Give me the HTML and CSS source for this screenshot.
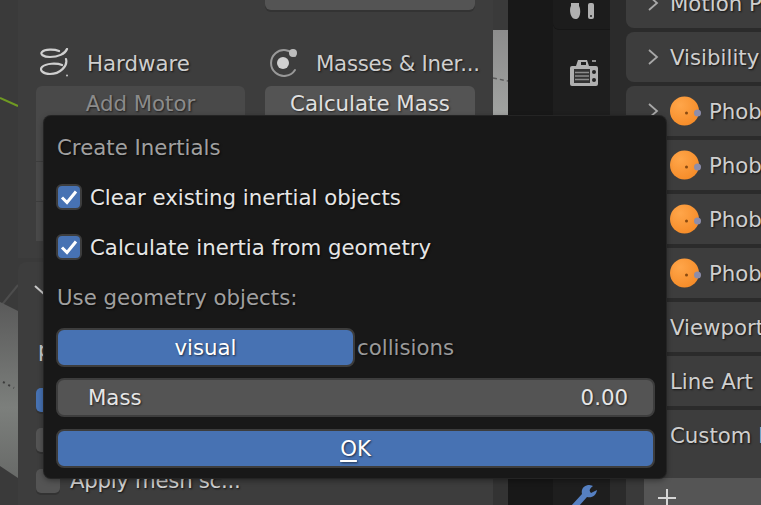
FILE: index.html
```html
<!DOCTYPE html>
<html>
<head>
    <title>Create Inertials</title>
    <link rel="stylesheet" href="styles.css">
</head>
<body>
    <div class="app">
        <!-- 3D viewport with the tool sidebar on it -->
        <div class="viewport">
            <svg class="scene" width="508" height="505" viewBox="0 0 508 505">
                <defs>
                    <linearGradient id="plane" x1="0" y1="0" x2="0" y2="1">
                        <stop offset="0" stop-color="#5a5a5a"/>
                        <stop offset="0.6" stop-color="#7c7f7c"/>
                        <stop offset="1" stop-color="#686a68"/>
                    </linearGradient>
                    <linearGradient id="planeRight" x1="0" y1="0" x2="0" y2="1">
                        <stop offset="0" stop-color="#8c8c8c"/>
                        <stop offset="1" stop-color="#a2a4a2"/>
                    </linearGradient>
                </defs>
                <path d="M0 98 L18 106" stroke="#6f9a22" stroke-width="2" fill="none"/>
                <path d="M0 307 L18 285" stroke="#4d4d4d" stroke-width="2" fill="none"/>
                <path d="M0 302 L18 311 V478 L0 466 Z" fill="url(#plane)"/>
                <path d="M3 382 L14 388" stroke="#3c3c3c" stroke-width="2" stroke-dasharray="2 4" fill="none"/>
                <rect x="493" y="30" width="15" height="90" fill="url(#planeRight)"/>
                <path d="M493 78 L508 81" stroke="#5c5c5c" stroke-width="1.5" stroke-dasharray="4 3" fill="none"/>
                <rect x="493" y="478" width="15" height="27" fill="#333333"/>
            </svg>

            <div class="sidebar">
                <div class="tool-panel">
                    <div class="tool-grid">
                        <div></div>
                        <div class="btn btn-stub"></div>
                        <div class="tool-head">
                            <svg class="head-icon" width="30" height="30" viewBox="0 0 30 30">
                                <path d="M27 1 C25 6 18 9 10 9 C3 9 0 6 2 4 C5 1 14 1 19 3 M26 11 C28 18 20 26 10 26 C3 26 -1 22 2 19 C6 15 17 15 22 17" fill="none" stroke="#d0d0d0" stroke-width="2.200" stroke-linecap="round"/>
                                <circle cx="27" cy="27.500" r="1" fill="#c9c9c9"/>
                            </svg>
                            <span class="label">Hardware</span>
                        </div>
                        <div class="tool-head">
                            <svg class="head-icon" width="30" height="30" viewBox="0 0 30 30">
                                <path d="M26 8 A13 13 0 1 0 26 22" fill="none" stroke="#999999" stroke-width="2" stroke-linecap="round"/>
                                <circle cx="14" cy="15" r="6" fill="#d0d0d0"/>
                                <circle cx="24" cy="5" r="4" fill="#bdbdbd"/>
                            </svg>
                            <span class="label label-masses">Masses &amp; Iner...</span>
                        </div>
                        <div class="btn btn-off">Add Motor</div>
                        <div class="btn">Calculate Mass</div>
                    </div>
                    <div class="hidden-stack">
                        <div class="stack-row"></div>
                        <div class="stack-row"></div>
                        <div class="stack-row"></div>
                    </div>
                </div>

                <div class="tool-panel tool-panel-low">
                    <svg class="low-chevron" width="14" height="12" viewBox="0 0 14 12">
                        <path d="M1 1 L10 9" stroke="#c9c9c9" stroke-width="2" fill="none"/>
                    </svg>
                    <div class="low-label">p</div>
                    <div class="low-check low-check-on"></div>
                    <div class="low-check"></div>
                    <div class="low-row">
                        <div class="low-check low-check-last"></div>
                        <span class="label label-apply">Apply mesh sc...</span>
                    </div>
                </div>
            </div>
        </div>

        <!-- dark strip between viewport and properties -->
        <div class="strip"></div>

        <div class="tabs">
            <div class="tab-group">
                <svg width="28" height="17" viewBox="0 0 28 17">
                    <path d="M1 0 H9 V3 C11 6 11 16 5.500 16 C0 16 -1 6 1 3 Z" fill="#b0b0b0"/>
                    <rect x="18" y="0" width="6" height="16" rx="2" fill="#b0b0b0"/>
                    <circle cx="21" cy="13" r="1" fill="#222222"/>
                </svg>
            </div>
            <svg class="tab-camera" width="28" height="27" viewBox="0 0 28 27">
                <path d="M2 7 H6 L8 1 H17 L19 7 H26 Q28 7 28 9 V25 Q28 27 26 27 H2 Q0 27 0 25 V9 Q0 7 2 7 Z" fill="#b0b0b0"/>
                <rect x="11" y="3" width="5" height="3" fill="#1e1e1e"/>
                <rect x="22" y="1" width="4" height="2" fill="#8e8e8e"/>
                <rect x="4" y="10" width="16" height="14" fill="#333333"/>
                <path d="M5 13.500 H19 M5 17 H19 M5 20.500 H19" stroke="#8c8c8c" stroke-width="1.500"/>
                <circle cx="24" cy="13" r="2" fill="#222222"/>
                <circle cx="24" cy="21" r="2" fill="#222222"/>
            </svg>
            <svg class="tab-wrench" width="28" height="22" viewBox="0 0 28 22">
                <path d="M18 1 C13 2 11 6 12 10 L1 22 H9 L17 13 C22 14 26 12 27 6 L21 9 C19 7 19 5 23 2 C21 1 20 1 18 1 Z" fill="#5680c2"/>
            </svg>
        </div>

        <!-- properties panels, they run off the right edge -->
        <div class="props">
            <div class="prop-row"><svg class="chev" width="12" height="18" viewBox="0 0 12 18"><path d="M2 2 L10 9 L2 16" fill="none" stroke="#a8a8a8" stroke-width="1.800"/></svg><span class="label">Motion Paths</span></div>
            <div class="prop-row"><svg class="chev" width="12" height="18" viewBox="0 0 12 18"><path d="M2 2 L10 9 L2 16" fill="none" stroke="#a8a8a8" stroke-width="1.800"/></svg><span class="label">Visibility</span></div>
            <div class="prop-row"><svg class="chev" width="12" height="18" viewBox="0 0 12 18"><path d="M2 2 L10 9 L2 16" fill="none" stroke="#a8a8a8" stroke-width="1.800"/></svg><svg class="phob-icon" width="32" height="30" viewBox="0 0 32 30"><defs><radialGradient id="orange" cx="0.35" cy="0.3" r="0.8"><stop offset="0" stop-color="#ffa64a"/><stop offset="1" stop-color="#f58a26"/></radialGradient></defs><circle cx="14.500" cy="15" r="14.500" fill="url(#orange)"/><circle cx="16.500" cy="17" r="1.500" fill="#8a4a10"/><circle cx="27.500" cy="17" r="3.500" fill="#8d8daa"/></svg><span class="label">Phobos</span></div>
            <div class="prop-row"><svg class="chev" width="12" height="18" viewBox="0 0 12 18"><path d="M2 2 L10 9 L2 16" fill="none" stroke="#a8a8a8" stroke-width="1.800"/></svg><svg class="phob-icon" width="32" height="30" viewBox="0 0 32 30"><circle cx="14.500" cy="15" r="14.500" fill="url(#orange)"/><circle cx="16.500" cy="17" r="1.500" fill="#8a4a10"/><circle cx="27.500" cy="17" r="3.500" fill="#8d8daa"/></svg><span class="label">Phobos</span></div>
            <div class="prop-row"><svg class="chev" width="12" height="18" viewBox="0 0 12 18"><path d="M2 2 L10 9 L2 16" fill="none" stroke="#a8a8a8" stroke-width="1.800"/></svg><svg class="phob-icon" width="32" height="30" viewBox="0 0 32 30"><circle cx="14.500" cy="15" r="14.500" fill="url(#orange)"/><circle cx="16.500" cy="17" r="1.500" fill="#8a4a10"/><circle cx="27.500" cy="17" r="3.500" fill="#8d8daa"/></svg><span class="label">Phobos</span></div>
            <div class="prop-row"><svg class="chev" width="12" height="18" viewBox="0 0 12 18"><path d="M2 2 L10 9 L2 16" fill="none" stroke="#a8a8a8" stroke-width="1.800"/></svg><svg class="phob-icon" width="32" height="30" viewBox="0 0 32 30"><circle cx="14.500" cy="15" r="14.500" fill="url(#orange)"/><circle cx="16.500" cy="17" r="1.500" fill="#8a4a10"/><circle cx="27.500" cy="17" r="3.500" fill="#8d8daa"/></svg><span class="label">Phobos</span></div>
            <div class="prop-row prop-plain"><span class="label">Viewport Display</span></div>
            <div class="prop-row prop-plain"><span class="label">Line Art</span></div>
            <div class="prop-row prop-plain prop-last"><span class="label">Custom Properties</span></div>
            <div class="add-bar">
                <div class="add-btn">
                    <svg width="18" height="18" viewBox="0 0 18 18"><path d="M9 0 V18 M0 9 H18" stroke="#d6d6d6" stroke-width="2"/></svg>
                </div>
            </div>
        </div>

        <!-- the dialog -->
        <div class="dialog">
            <div class="dlg-title">Create Inertials</div>
            <div class="check-row">
                <span class="check"><svg width="18" height="16" viewBox="0 0 18 16"><path d="M2 8.500 L7 13.500 L16 2.500" fill="none" stroke="#ffffff" stroke-width="3"/></svg></span>
                <span class="dlg-text">Clear existing inertial objects</span>
            </div>
            <div class="check-row">
                <span class="check"><svg width="18" height="16" viewBox="0 0 18 16"><path d="M2 8.500 L7 13.500 L16 2.500" fill="none" stroke="#ffffff" stroke-width="3"/></svg></span>
                <span class="dlg-text">Calculate inertia from geometry</span>
            </div>
            <div class="dlg-sub">Use geometry objects:</div>
            <div class="toggle-row">
                <div class="dlg-btn toggle-on">visual</div>
                <span class="toggle-off">collisions</span>
            </div>
            <div class="dlg-btn mass-field"><span>Mass</span><span>0.00</span></div>
            <div class="dlg-btn ok-btn"><span><u>O</u>K</span></div>
        </div>
    </div>
</body>
</html>
```

FILE: styles.css
```css
html, body {
    margin: 0;
    padding: 0;
    height: 100%;
    overflow: hidden;
}
body {
    font-family: "DejaVu Sans", sans-serif;
    font-size: 21.3px;
    background-color: #3d3d3d;
}
.app {
    position: relative;
    display: flex;
    width: 761px;
    height: 505px;
    overflow: hidden;
}
.label {
    color: #cfcfcf;
    white-space: nowrap;
    text-shadow: 1px 1px 2px rgba(0, 0, 0, 0.7);
}

/* viewport and tool sidebar */
.viewport {
    position: relative;
    width: 508px;
    flex: none;
    background-color: #3a3a3a;
}
.scene {
    position: absolute;
    left: 0;
    top: 0;
}
.sidebar {
    position: relative;
    margin-left: 18px;
    width: 475px;
    height: 505px;
    display: flex;
    flex-direction: column;
    gap: 4px;
}
.tool-panel {
    background-color: #3d3d3d;
    padding: 0 18px;
    height: 258px;
    box-sizing: border-box;
}
.tool-panel-low {
    flex: 1;
    height: auto;
    border-radius: 8px 8px 0 0;
    position: relative;
    padding: 0 18px;
}
.tool-grid {
    display: grid;
    grid-template-columns: 209px 210px;
    grid-template-rows: 10px 38px 38px;
    column-gap: 20px;
    row-gap: 0;
}
.btn {
    background-color: #545454;
    color: #e0e0e0;
    border-radius: 6px 6px 0 0;
    height: 38px;
    line-height: 36px;
    text-align: center;
    text-shadow: 1px 1px 2px rgba(0, 0, 0, 0.6);
}
.btn-stub {
    height: 10px;
    border-radius: 0 0 6px 6px;
    box-shadow: 0 2px 0 #333333;
}
.btn-off {
    background-color: #494949;
    color: #8b8b8b;
}
.tool-head {
    display: flex;
    align-items: center;
    gap: 17px;
    height: 38px;
    margin-top: 34px;
    margin-bottom: -34px;
    padding-left: 4px;
}
.tool-grid .btn:not(.btn-stub) {
    margin-top: 38px;
    margin-bottom: -38px;
}
.head-icon {
    flex: none;
}
.label-masses {
    letter-spacing: -0.27px;
}
.label-apply {
    letter-spacing: -0.3px;
}
.hidden-stack {
    margin-top: 36px;
    width: 209px;
    display: flex;
    flex-direction: column;
    gap: 1px;
}
.stack-row {
    height: 39px;
    background-color: #494949;
}
.low-chevron {
    display: block;
    position: relative;
    margin: 23px 0 0 -2px;
}
.low-label {
    margin: 40px 0 0 2px;
    color: #cfcfcf;
    line-height: 26px;
}
.low-check {
    width: 24px;
    height: 24px;
    background-color: #545454;
    border-radius: 5px;
    box-shadow: 0 2px 0 #333333;
    margin-top: 16px;
}
.low-check-on {
    margin-top: 25px;
    background-color: #4772b3;
}
.low-row {
    display: flex;
    align-items: center;
    gap: 10px;
    margin-top: 16px;
}
.low-check-last {
    margin-top: 0;
    flex: none;
}

/* dark strip and tab column */
.strip {
    width: 45px;
    flex: none;
    background-color: #181818;
}
.tabs {
    width: 57px;
    flex: none;
    background-color: #1e1e1e;
    position: relative;
    display: flex;
    flex-direction: column;
    align-items: center;
}
.tab-group {
    width: 100%;
    height: 29px;
    padding-left: 17px;
    padding-top: 0;
    box-sizing: border-box;
    background-color: #1c1c1c;
    border-radius: 0 0 0 6px;
    box-shadow: 0 1px 0 #161616;
}
.tab-camera {
    margin-top: 30px;
    margin-left: 5px;
}
.tab-wrench {
    margin-top: auto;
    margin-left: 5px;
    margin-bottom: -1px;
}

/* properties column */
.props {
    flex: 1;
    background-color: #2b2b2b;
    padding-left: 16px;
    margin-top: -22px;
    display: flex;
    flex-direction: column;
    gap: 4px;
    min-width: 0;
    height: 527px;
    overflow: hidden;
}
.prop-row {
    height: 50px;
    flex: none;
    width: 250px;
    background-color: #3d3d3d;
    border-radius: 8px 0 0 8px;
    display: flex;
    align-items: center;
    padding-left: 21px;
    box-sizing: border-box;
}
.chev {
    flex: none;
    margin-right: 11px;
}
.phob-icon {
    flex: none;
    margin-right: 7px;
}
.prop-plain {
    padding-left: 44px;
}
.prop-last {
    height: 68px;
    align-items: flex-start;
    padding-top: 13px;
    margin-bottom: -4px;
    border-radius: 0;
}
.add-bar {
    height: 27px;
    flex: none;
    background-color: #3a3a3a;
    padding-left: 18px;
    display: flex;
}
.add-btn {
    width: 200px;
    background-color: #555555;
    padding: 9px 0 0 14px;
    box-sizing: border-box;
}

/* popup dialog, lies over everything */
.dialog {
    position: absolute;
    left: 44px;
    top: 116px;
    width: 622px;
    height: 362px;
    box-sizing: border-box;
    padding: 0 11px 0 12px;
    background-color: #181818;
    border-radius: 7px;
    box-shadow: 0 0 0 1px #242424, 0 2px 6px rgba(0, 0, 0, 0.45);
    display: flex;
    flex-direction: column;
}
.dlg-title {
    height: 26px;
    margin: 19px 0 0 1px;
    line-height: 26px;
    color: #a0a0a0;
    text-shadow: 1px 1px 2px rgba(0, 0, 0, 0.7);
}
.check-row {
    display: flex;
    align-items: center;
    gap: 8px;
    height: 26px;
    margin-top: 23px;
}
.check-row + .check-row {
    margin-top: 24px;
}
.check {
    width: 22px;
    height: 22px;
    flex: none;
    display: flex;
    align-items: center;
    justify-content: center;
    background-color: #4772b3;
    border: 2px solid #3d3d3d;
    border-radius: 6px;
}
.dlg-text {
    color: #e6e6e6;
    white-space: nowrap;
    text-shadow: 1px 1px 2px rgba(0, 0, 0, 0.7);
}
.dlg-sub {
    margin: 25px 0 0 1px;
    height: 26px;
    line-height: 26px;
    color: #a0a0a0;
    text-shadow: 1px 1px 2px rgba(0, 0, 0, 0.7);
}
.toggle-row {
    display: flex;
    align-items: center;
    gap: 2px;
    margin-top: 17px;
}
.dlg-btn {
    box-sizing: border-box;
    height: 39px;
    border: 2px solid #3d3d3d;
    border-radius: 8px;
    display: flex;
    align-items: center;
    color: #e6e6e6;
    text-shadow: 1px 1px 2px rgba(0, 0, 0, 0.6);
}
.toggle-on {
    width: 299px;
    justify-content: center;
    background-color: #4772b3;
    color: #ffffff;
}
.toggle-off {
    color: #9a9a9a;
    text-shadow: 1px 1px 2px rgba(0, 0, 0, 0.7);
}
.mass-field {
    margin-top: 11px;
    background-color: #545454;
    justify-content: space-between;
    padding: 0 25px 0 30px;
}
.ok-btn {
    margin-top: 12px;
    background-color: #4772b3;
    color: #ffffff;
    justify-content: center;
}
.ok-btn u {
    text-underline-offset: 4px;
}
```
